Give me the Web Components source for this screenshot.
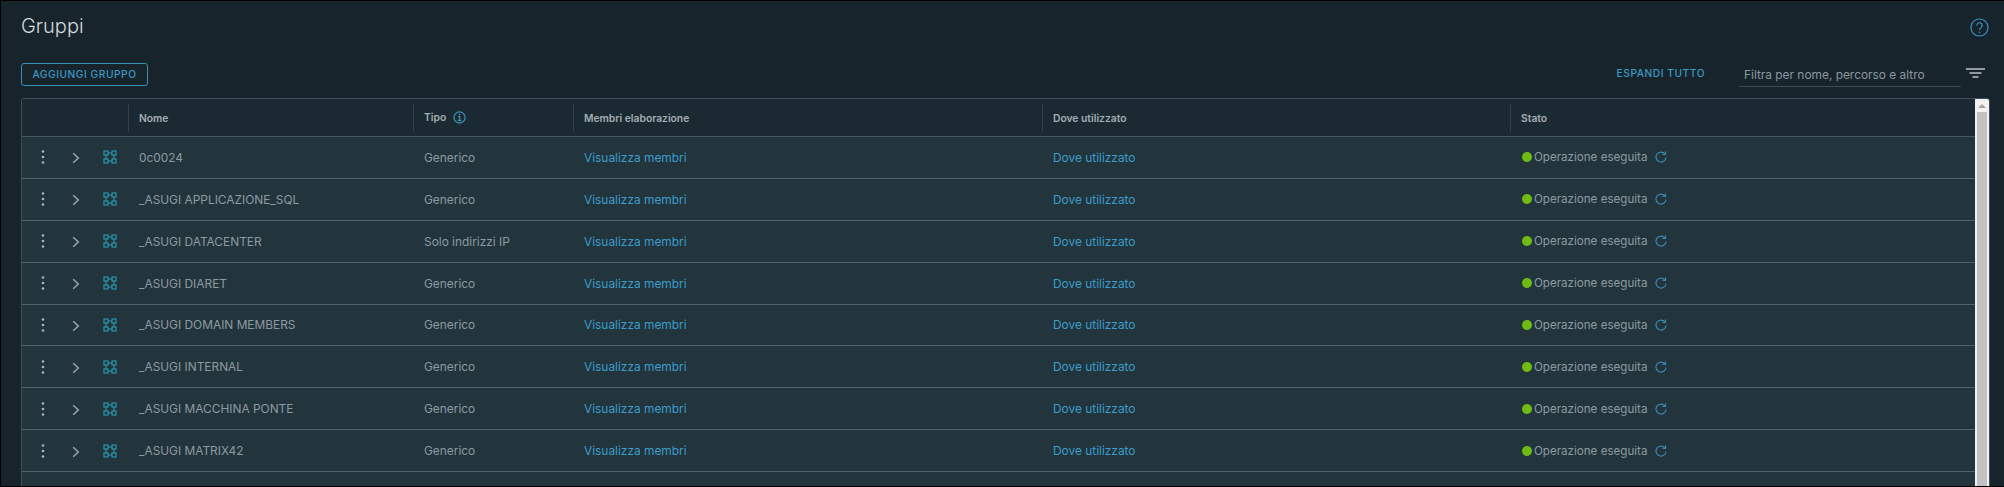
<!DOCTYPE html>
<html lang="it">
<head>
<meta charset="utf-8">
<title>Gruppi</title>
<style>
  html, body { margin: 0; height: 100%; background: #000; overflow: hidden; }
  body { font-family: "Inter", "Liberation Sans", sans-serif; }
</style>
</head>
<body>
<groups-page></groups-page>
<script>
const ICONS = {
  dots: `<svg width="4" height="16" viewBox="0 0 4 16"><circle cx="2" cy="2.5" r="1.3"/><circle cx="2" cy="8" r="1.3"/><circle cx="2" cy="13.5" r="1.3"/></svg>`,
  chevron: `<svg width="8" height="12" viewBox="0 0 8 12" fill="none" stroke="currentColor" stroke-width="1.5"><path d="M1.2 1.2 6.3 6 1.2 10.8"/></svg>`,
  group: `<svg width="14" height="14" viewBox="0 0 14 14" fill="none" stroke="currentColor" stroke-width="1.1"><rect x="1" y="1" width="4" height="4"/><rect x="9" y="1" width="4" height="4"/><rect x="1" y="9" width="4" height="4"/><rect x="9" y="9" width="4" height="4"/><path d="M5 3h4M3 5v4M11 5v4M5 11h4"/></svg>`,
  refresh: `<svg width="12" height="12" viewBox="0 0 12 12" fill="none" stroke="currentColor" stroke-width="1.2"><path d="M9.9 2.9A5 5 0 1 0 11 6.5"/><path d="M10.5.4v3h-3"/></svg>`,
  info: `<svg width="13" height="13" viewBox="0 0 13 13" fill="none" stroke="currentColor"><circle cx="6.5" cy="6.5" r="5.6" stroke-width="1.1"/><path d="M5.2 5.6h1.5v3.6M4.8 9.4h3.6" stroke-width="1.1"/><circle cx="6.4" cy="3.6" r=".8" fill="currentColor" stroke="none"/></svg>`,
  help: `<svg width="19" height="19" viewBox="0 0 20 20" fill="none" stroke="currentColor" stroke-width="1.2"><circle cx="10" cy="10" r="9"/><path d="M7.2 7.8a2.8 2.8 0 1 1 4.4 2.3c-1 .7-1.6 1.2-1.6 2.5"/><circle cx="10" cy="15" r=".8" fill="currentColor" stroke="none"/></svg>`,
  filter: `<svg width="19" height="10" viewBox="0 0 19 10" fill="none" stroke="currentColor" stroke-width="1.3"><path d="M0 1h19M3.5 5h12M6.5 9h6"/></svg>`
};

class GroupsPage extends HTMLElement {
  constructor() {
    super();
    const shadow = this.attachShadow({ mode: 'open' });
    shadow.innerHTML = `
<style>
  :host {
    display: flex;
    flex-direction: column;
    box-sizing: border-box;
    height: 485px;
    margin: 1px 0 0 1px;
    padding: 0 14px 0 20px;
    background: #17242c;
  }
</style>
<page-title>Gruppi</page-title>
<groups-toolbar></groups-toolbar>
<groups-table></groups-table>
`;
  }
}

class PageTitle extends HTMLElement {
  constructor() {
    super();
    const shadow = this.attachShadow({ mode: 'open' });
    shadow.innerHTML = `
<style>
  :host {
    display: flex;
    justify-content: space-between;
    align-items: center;
    height: 50px;
    font-size: 20px;
    font-weight: 300;
    color: #d4d9dc;
  }
  .help { display: flex; margin: 2px 1px 0 0; color: #3c98c4; }
</style>
<slot></slot>
<span class="help">${ICONS.help}</span>
`;
  }
}

class GroupsToolbar extends HTMLElement {
  constructor() {
    super();
    const shadow = this.attachShadow({ mode: 'open' });
    shadow.innerHTML = `
<style>
  :host {
    display: flex;
    align-items: center;
    height: 47px;
    flex: none;
  }
  button {
    width: 127px;
    height: 23px;
    margin-top: -1px;
    padding: 0;
    background: transparent;
    border: 1px solid #3c8fb5;
    border-radius: 3px;
    color: #3c98c4;
    font: 500 10.2px "Inter", "Liberation Sans", sans-serif;
    letter-spacing: .55px;
  }
  .expand {
    margin-left: auto;
    margin-top: -3px;
    color: #3c98c4;
    font-size: 10.2px;
    font-weight: 500;
    letter-spacing: .55px;
  }
  .filter {
    box-sizing: border-box;
    width: 222px;
    height: 24px;
    margin: 0 5px 0 34px;
    padding: 0 5px;
    background: transparent;
    border: 0;
    border-bottom: 1px solid #3d4c54;
    font: 11.9px "Inter", "Liberation Sans", sans-serif;
    color: #8b979e;
    outline: 0;
  }
  .filter::placeholder { color: #8b979e; opacity: 1; }
  .filter-icon { display: flex; margin-right: 5px; margin-top: -4px; color: #b9c1c5; }
</style>
<button type="button">AGGIUNGI GRUPPO</button>
<span class="expand">ESPANDI TUTTO</span>
<input class="filter" type="text" placeholder="Filtra per nome, percorso e altro" aria-label="Filtro">
<span class="filter-icon">${ICONS.filter}</span>
`;
  }
}

const GROUP_COLUMNS = '106px 285px 160px 469px 468px 1fr';

class GroupsTable extends HTMLElement {
  constructor() {
    super();
    const shadow = this.attachShadow({ mode: 'open' });
    shadow.innerHTML = `
<style>
  :host {
    display: flex;
    flex: 1;
    min-height: 0;
    border: 1px solid #3f4f57;
    border-bottom: 0;
    border-radius: 3px 3px 0 0;
    overflow: hidden;
    font-size: 11.9px;
  }
  .content { flex: 1; min-width: 0; }
  .head {
    display: grid;
    grid-template-columns: ${GROUP_COLUMNS};
    height: 37px;
    align-items: center;
    background: #1b2a32;
    border-bottom: 1px solid #47575f;
    font-size: 10.3px;
    font-weight: 600;
    color: #a3adb3;
  }
  .head span {
    display: flex;
    align-items: center;
    gap: 7px;
    height: 28px;
    padding-left: 10px;
    border-left: 1px solid #34434b;
  }
  .head span:first-child { border-left: 0; }
  .head svg { color: #3c98c4; }
  .head i { font-style: normal; margin-top: -2px; }
  .rows { background: #22343c; height: 100%; }
  .bar {
    flex: none;
    width: 14px;
    background: #f1f1f1;
    display: flex;
    flex-direction: column;
    align-items: center;
  }
  .arrow {
    width: 0; height: 0; margin: 5px 0 4px;
    border: 4px solid transparent;
    border-top: 0;
    border-bottom: 4px solid #a3a3a3;
  }
  .thumb { flex: 1; width: 10px; background: #c1c1c1; }
</style>
<div class="content">
  <div class="head">
    <span></span>
    <span>Nome</span>
    <span><i>Tipo</i> ${ICONS.info}</span>
    <span>Membri elaborazione</span>
    <span>Dove utilizzato</span>
    <span>Stato</span>
  </div>
  <div class="rows"></div>
</div>
<div class="bar"><div class="arrow"></div><div class="thumb"></div></div>
`;
    const data = [
      ['0c0024', 'Generico'],
      ['_ASUGI APPLICAZIONE_SQL', 'Generico'],
      ['_ASUGI DATACENTER', 'Solo indirizzi IP'],
      ['_ASUGI DIARET', 'Generico'],
      ['_ASUGI DOMAIN MEMBERS', 'Generico'],
      ['_ASUGI INTERNAL', 'Generico'],
      ['_ASUGI MACCHINA PONTE', 'Generico'],
      ['_ASUGI MATRIX42', 'Generico'],
      ['', '']
    ];
    const rows = shadow.querySelector('.rows');
    data.forEach(([name, type]) => {
      const row = document.createElement('group-row');
      row.setAttribute('name', name);
      row.setAttribute('type', type);
      rows.appendChild(row);
    });
  }
}

class GroupRow extends HTMLElement {
  connectedCallback() {
    if (this.shadowRoot) return;
    const shadow = this.attachShadow({ mode: 'open' });
    const name = this.getAttribute('name');
    const type = this.getAttribute('type');
    shadow.innerHTML = `
<style>
  :host {
    display: grid;
    grid-template-columns: ${GROUP_COLUMNS};
    height: 40.875px;
    align-items: center;
    border-bottom: 1px solid #526269;
    color: #8d9aa1;
  }
  .icons {
    display: flex;
    align-items: center;
    padding-left: 19px;
  }
  .dots { display: flex; fill: #aab4b9; }
  .chev { display: flex; margin-left: 27px; margin-top: 2px; color: #9aa6ac; }
  .grp { display: flex; margin-left: 23px; color: #2c9dbb; }
  .cell { padding-left: 11px; white-space: nowrap; }
  a { color: #3c9ccb; text-decoration: none; }
  .status { display: flex; align-items: center; padding-left: 12px; font-size: 11.6px; }
  .dot { width: 10px; height: 10px; border-radius: 50%; background: #6fbb14; margin-right: 2px; }
  .status svg { margin-left: 8px; color: #3a86ad; }
</style>
${name ? `<div class="icons">
  <span class="dots">${ICONS.dots}</span>
  <span class="chev">${ICONS.chevron}</span>
  <span class="grp">${ICONS.group}</span>
</div>
<div class="cell">${name}</div>
<div class="cell">${type}</div>
<div class="cell"><a href="#">Visualizza membri</a></div>
<div class="cell"><a href="#">Dove utilizzato</a></div>
<div class="cell status"><span class="dot"></span>Operazione eseguita ${ICONS.refresh}</div>` : ''}
`;
  }
}

customElements.define('page-title', PageTitle);
customElements.define('groups-toolbar', GroupsToolbar);
customElements.define('group-row', GroupRow);
customElements.define('groups-table', GroupsTable);
customElements.define('groups-page', GroupsPage);
</script>
</body>
</html>
